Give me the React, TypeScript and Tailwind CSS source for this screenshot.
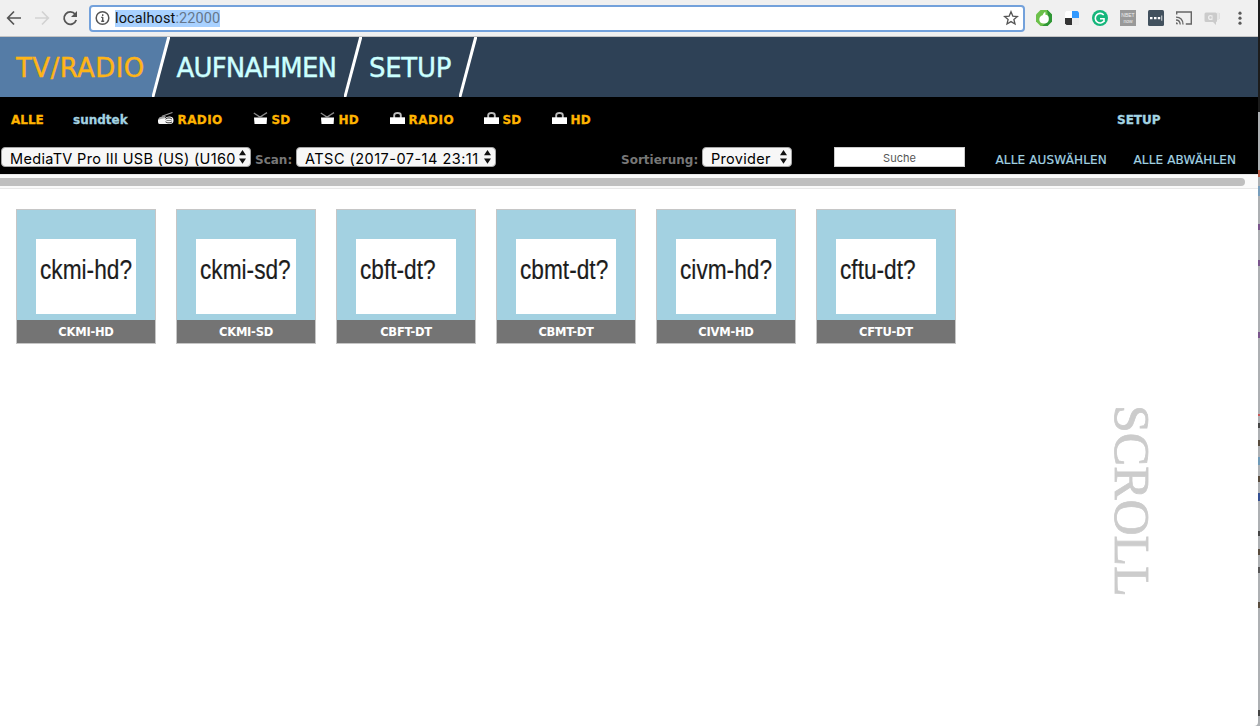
import React from "react";

function Slant({ left }: { left: string }) {
  return (
    <svg className="block shrink-0" width="18" height="60" viewBox="0 0 18 60">
      <path d="M0 0H17L1 60H0Z" fill={left} />
      <path d="M15.2 0H18.4L2.4 60H-0.6Z" fill="#fff" />
    </svg>
  );
}

function RadioIcon() {
  return (
    <svg width="16" height="13" viewBox="0 0 16 13">
      <path d="M4 4.2L14.5 0.5" stroke="#999" strokeWidth="1.2" />
      <path d="M0.5 6.5Q1 5 4 4.6L8 4Q6.5 5.5 7.2 7L0.5 7.8Z" fill="#aaa" />
      <path d="M0 7.5L7 6.2Q9 4.2 12 4.6Q15.5 5 15.5 8.2Q15.5 12 12 12H1.5Q0 12 0 10Z" fill="#f8f8f8" />
      <path d="M7.5 7.2Q9 5.8 11 5.9Q13.5 6 14 7.2M7.5 9.8Q9 11 11 10.9Q13.5 10.8 14 9.8" stroke="#333" strokeWidth="1" fill="none" />
      <path d="M8.5 8.5H13.5" stroke="#777" strokeWidth="0.9" />
    </svg>
  );
}

function TvIcon() {
  return (
    <svg width="15" height="13" viewBox="0 0 15 13">
      <path d="M0.8 1L7 5L14 0.6" stroke="#888" strokeWidth="1.3" fill="none" />
      <path d="M1 5.5H14L13.6 12H1.5Z" fill="#fff" />
      <path d="M4.5 4.6H10L7 6.2Z" fill="#999" />
    </svg>
  );
}

function LockIcon() {
  return (
    <svg width="15" height="13" viewBox="0 0 15 13">
      <path d="M4.2 6V3.2Q4.2 1 7.5 1T10.8 3.2V6" stroke="#bbb" strokeWidth="1.9" fill="none" />
      <path d="M0 5.3H15V12H0Z" fill="#fff" />
    </svg>
  );
}

const filters = [
  { label: "ALLE", cls: "w-[62px]", icon: null, color: "text-[#ffb400]" },
  { label: "sundtek", cls: "w-[85px]", icon: null, color: "text-[#a3d3e2]" },
  { label: "RADIO", cls: "w-[95px] tracking-[0.4px]", icon: <RadioIcon />, color: "text-[#ffb400]" },
  { label: "SD", cls: "w-[67px]", icon: <TvIcon />, color: "text-[#ffb400]" },
  { label: "HD", cls: "w-[70px] tracking-[0.3px]", icon: <TvIcon />, color: "text-[#ffb400]" },
  { label: "RADIO", cls: "w-[94px] tracking-[0.5px]", icon: <LockIcon />, color: "text-[#ffb400]" },
  { label: "SD", cls: "w-[68px]", icon: <LockIcon />, color: "text-[#ffb400]" },
  { label: "HD", cls: "w-[565px] tracking-[0.3px]", icon: <LockIcon />, color: "text-[#ffb400]" },
  { label: "SETUP", cls: "w-[60px]", icon: null, color: "text-[#a3d3e2]" },
];

function Select({ label, className, textClass }: { label: string; className: string; textClass: string }) {
  return (
    <button className={`flex h-5 shrink-0 items-center justify-between rounded-[4px] border border-[#a6a6a6] bg-[#f7f7f7] pr-[4px] pl-[8px] font-[Inter,sans-serif] text-[14.5px] leading-5 font-normal text-black ${className}`}>
      <span className={`relative top-[2px] overflow-hidden whitespace-nowrap ${textClass}`}>{label}</span>
      <svg className="shrink-0" width="7" height="14" viewBox="0 0 7 14">
        <path d="M3.5 0L7 5.3H0ZM0 8.5H7L3.5 13.8Z" fill="#111" />
      </svg>
    </button>
  );
}

const channels = ["ckmi-hd", "ckmi-sd", "cbft-dt", "cbmt-dt", "civm-hd", "cftu-dt"];

function Channel({ name }: { name: string }) {
  return (
    <div className="flex h-[135px] w-[140px] flex-col border border-[#c6c6c6] bg-[#a3d1e1]">
      <div className="mt-[29px] ml-[19px] h-[75px] w-[100px] bg-white pt-[15px] pl-[4px]">
        <span className="inline-block origin-left scale-x-[0.84] font-['Liberation_Sans',Arial,sans-serif] text-[27px] leading-[32px] whitespace-nowrap text-[#1c1c1c] [-webkit-text-stroke:0.2px_#1c1c1c]">{name}?</span>
      </div>
      <div className="mt-[6px] flex h-[23px] items-center justify-center bg-[#747474] pt-[2px] text-[11.5px] leading-[17px] font-bold tracking-[-0.25px] text-white">{name.toUpperCase()}</div>
    </div>
  );
}

function Toolbar() {
  return (
    <header className="flex h-[37px] items-center border-b border-[#c4c4c4] bg-[#f0f0f0]">
      <svg className="shrink-0" width="89" height="36" viewBox="0 0 89 36" fill="none">
        <path d="M21 18H8M14 11.5L7.7 18L14 24.5" stroke="#555" strokeWidth="1.7" />
        <path d="M35 18H48M42 11.5L48.3 18L42 24.5" stroke="#d2d2d2" strokeWidth="1.7" />
        <path d="M75.2 14.3A6.2 6.2 0 1 0 76.2 20" stroke="#555" strokeWidth="1.8" />
        <path d="M77 11V17H71Z" fill="#555" />
      </svg>
      <div className="flex h-[27px] w-[936px] shrink-0 items-center rounded-[4px] border-2 border-[#73a1db] bg-white pr-[4px] pl-[4px]">
        <svg width="16" height="16" viewBox="0 0 16 16" fill="none">
          <circle cx="7.5" cy="8" r="6.3" stroke="#555" strokeWidth="1.5" />
          <path d="M7.7 7V11.5M7.7 4.3V6M6.2 7.4H8M6.2 11.3H9.2" stroke="#555" strokeWidth="1.4" />
        </svg>
        <span className="ml-[4px] bg-[#a8d1ff] font-[Roboto,sans-serif] text-[14.5px] leading-[17px] tracking-[0.12px] text-[#111]">localhost<span className="text-[#65778c]">:22000</span></span>
        <svg className="ml-auto" width="16" height="16" viewBox="0 0 16 16" fill="none">
          <path d="M8 1.8L9.8 6.1L14.4 6.5L10.9 9.5L12 14L8 11.6L4 14L5.1 9.5L1.6 6.5L6.2 6.1Z" stroke="#555" strokeWidth="1.3" />
        </svg>
      </div>
      <div className="ml-[11px] flex items-center gap-[12px]">
        <svg width="16" height="16" viewBox="0 0 16 16">
          <path d="M4.5 0H11.5L16 4.5V11.5L11.5 16H4.5L0 11.5V4.5Z" fill="#6cc04a" />
          <path d="M11 0H11.5L16 4.5V11.5L11.5 16H6L13 11Z" fill="#2f9636" />
          <path d="M9.2 1.8Q9.8 3.2 9.2 4.6Q12.9 4.9 12.8 9Q12.4 13.6 8 13.6Q3.2 13.3 3.3 9.2Q3.6 6.2 6.6 5.3Q7.4 3.2 9.2 1.8Z" fill="#fff" />
        </svg>
        <svg width="16" height="16" viewBox="0 0 16 16">
          <path d="M2.5 1H8V8H1V2.5Z" fill="#fff" />
          <path d="M8 1H13.5L15 2.5V8H8Z" fill="#3299fe" />
          <path d="M1 8H8V15H2.5L1 13.5Z" fill="#333" />
          <path d="M8 8H15V15H8Z" fill="#ececec" />
        </svg>
        <svg width="16" height="16" viewBox="0 0 16 16" fill="none">
          <circle cx="8" cy="8" r="8" fill="#15b67b" />
          <path d="M11.7 5A4.8 4.8 0 1 0 12 11M8 8.7H12V12" stroke="#fff" strokeWidth="1.6" />
        </svg>
        <div className="flex h-4 w-4 flex-col items-center justify-center bg-[#999] font-['Liberation_Sans',sans-serif] text-[5px] leading-[6px] font-normal text-[#eee]">
          <span>NBET</span>
          <span>now</span>
        </div>
        <svg width="16" height="16" viewBox="0 0 16 16">
          <rect width="16" height="16" rx="1.5" fill="#42515e" />
          <path d="M2 7H4.5V9.2H2ZM6 7H8.5V9.2H6ZM9.8 7H12.2V9.2H9.8ZM13.4 5.5H14.2V10.8H13.4Z" fill="#fff" />
        </svg>
        <svg width="16" height="16" viewBox="0 0 16 16" fill="none" stroke="#666">
          <path d="M0.7 4.5V2H15.3V14H9.8" strokeWidth="1.4" />
          <path d="M0 7.2Q6.8 7.2 7 14.5M0 10Q4 10 4.2 14.5" strokeWidth="1.3" />
          <path d="M0 12.3Q2 12.4 2 14.3H0Z" fill="#666" stroke="none" />
        </svg>
        <svg width="16" height="16" viewBox="0 0 16 16">
          <path d="M2 2.5H11.5Q13 2.5 13 4V11Q13 12 12 12V15L9 12H2Q0.5 12 0.5 10.5V4Q0.5 2.5 2 2.5Z" fill="#cbcbcb" />
          <circle cx="6.5" cy="7.5" r="1.9" fill="none" stroke="#eee" strokeWidth="1.3" />
          <path d="M8.6 5.3V10M14 2.5V10M15.6 3V9" stroke="#ddd" />
        </svg>
        <svg width="16" height="16" viewBox="0 0 16 16" fill="#5a5a5a">
          <circle cx="8" cy="3.2" r="1.6" />
          <circle cx="8" cy="8.2" r="1.6" />
          <circle cx="8" cy="13.2" r="1.6" />
        </svg>
      </div>
    </header>
  );
}

export default function App() {
  return (
    <div className="flex h-[726px] w-[1260px] overflow-hidden bg-[#adb0b3] font-['DejaVu_Sans',Verdana,sans-serif]">
      <div className="flex w-[1258px] shrink-0 flex-col rounded-br-[4px] bg-white">
        <Toolbar />
        <nav className="flex h-[60px] shrink-0 bg-[#2e4156] text-[26px] leading-[62px] whitespace-nowrap text-[#ccffff] [-webkit-text-stroke:0.4px]">
          <div className="w-[152px] bg-[#557ca6] pl-[16px] tracking-[0.4px] text-[#ffb516]">TV/RADIO</div>
          <Slant left="#557ca6" />
          <div className="w-[174px] pl-[6.5px] tracking-[-0.8px]">AUFNAHMEN</div>
          <Slant left="#2e4156" />
          <div className="w-[97px] pl-[7px] tracking-[-0.3px]">SETUP</div>
          <Slant left="#2e4156" />
        </nav>
        <section className="h-[77px] shrink-0 bg-black">
          <div className="flex h-[43px] items-center pl-[11px] text-[12px] font-bold whitespace-nowrap [-webkit-text-stroke:0.3px]">
            {filters.map((f, i) => (
              <div key={i} className={`flex shrink-0 items-center gap-[3.5px] ${f.cls} ${f.color}`}>
                {f.icon}
                <span className="relative top-px">{f.label}</span>
              </div>
            ))}
          </div>
          <div className="flex h-[34px] items-center pl-px text-[12px] font-bold whitespace-nowrap text-[#777]">
            <Select label="MediaTV Pro III USB (US) (U160" className="w-[250px]" textClass="w-[227px] text-left tracking-[0.32px]" />
            <span className="relative top-[3px] w-[45px] pl-[4px]">Scan:</span>
            <Select label="ATSC (2017-07-14 23:11" className="w-[200px]" textClass="w-[174px] text-left tracking-[0.48px]" />
            <span className="relative top-[3px] ml-[125px] w-[81px]">Sortierung:</span>
            <Select label="Provider" className="w-[90px]" textClass="text-left tracking-[0.3px]" />
            <div className="ml-[42px] flex h-5 w-[131px] items-center justify-center border border-[#ccc] bg-white pt-[2px] font-[Inter,sans-serif] text-[11px] font-normal text-[#555]">Suche</div>
            <span className="relative top-[3px] ml-[30.5px] w-[138px] font-normal tracking-[0.15px] text-[#a3d3e2] [-webkit-text-stroke:0.2px]">ALLE AUSWÄHLEN</span>
            <span className="relative top-[3px] font-normal tracking-[0.15px] text-[#a3d3e2] [-webkit-text-stroke:0.2px]">ALLE ABWÄHLEN</span>
          </div>
        </section>
        <div className="flex h-[15px] shrink-0 items-center border-y border-[#e8e8e8] bg-[#fafafa]">
          <div className="h-2 w-[1245px] rounded-r-full rounded-l-[3px] bg-[#bfbfbf]" />
        </div>
        <main className="flex flex-1 items-start pt-[20px] pl-[16px]">
          <div className="flex gap-[20px]">
            {channels.map((c) => (
              <Channel key={c} name={c} />
            ))}
          </div>
          <div className="mt-[196px] ml-[151px] font-['Liberation_Serif',serif] text-[50px] leading-[50px] text-[#ccc] [-webkit-text-stroke:0.8px_#ccc] [writing-mode:vertical-rl]">SCROLL</div>
        </main>
      </div>
      <div className="flex w-[2px] flex-col bg-[#adb0b3]">
        <div className="h-[112px] bg-[#1c1c1c]" />
        <div className="mt-[58px] h-[7px] bg-[#b65a45]" />
        <div className="mt-[9px] h-[10px] bg-[#779dbb]" />
        <div className="mt-[28px] h-[6px] bg-[#79558b]" />
        <div className="mt-[30px] h-[6px] bg-[#79558b]" />
        <div className="mt-[66px] h-[6px] bg-[#79558b]" />
        <div className="mt-[76px] h-[2px] bg-[#c85555]" />
        <div className="mt-[7px] h-[5px] bg-[#444]" />
        <div className="mt-[12px] h-[6px] bg-[#574a3c]" />
        <div className="mt-[11px] h-[8px] bg-[#6e9ab8]" />
        <div className="mt-[11px] h-[6px] bg-[#574a3c]" />
        <div className="mt-[11px] h-[8px] bg-[#344f92]" />
        <div className="mt-[30px] h-[5px] bg-[#444]" />
        <div className="mt-[13px] h-[6px] bg-[#574a3c]" />
        <div className="mt-[12px] h-[6px] bg-[#555]" />
        <div className="mt-[29px] h-[6px] bg-[#574a3c]" />
        <div className="mt-[102px] h-[6px] bg-[#444]" />
      </div>
    </div>
  );
}
